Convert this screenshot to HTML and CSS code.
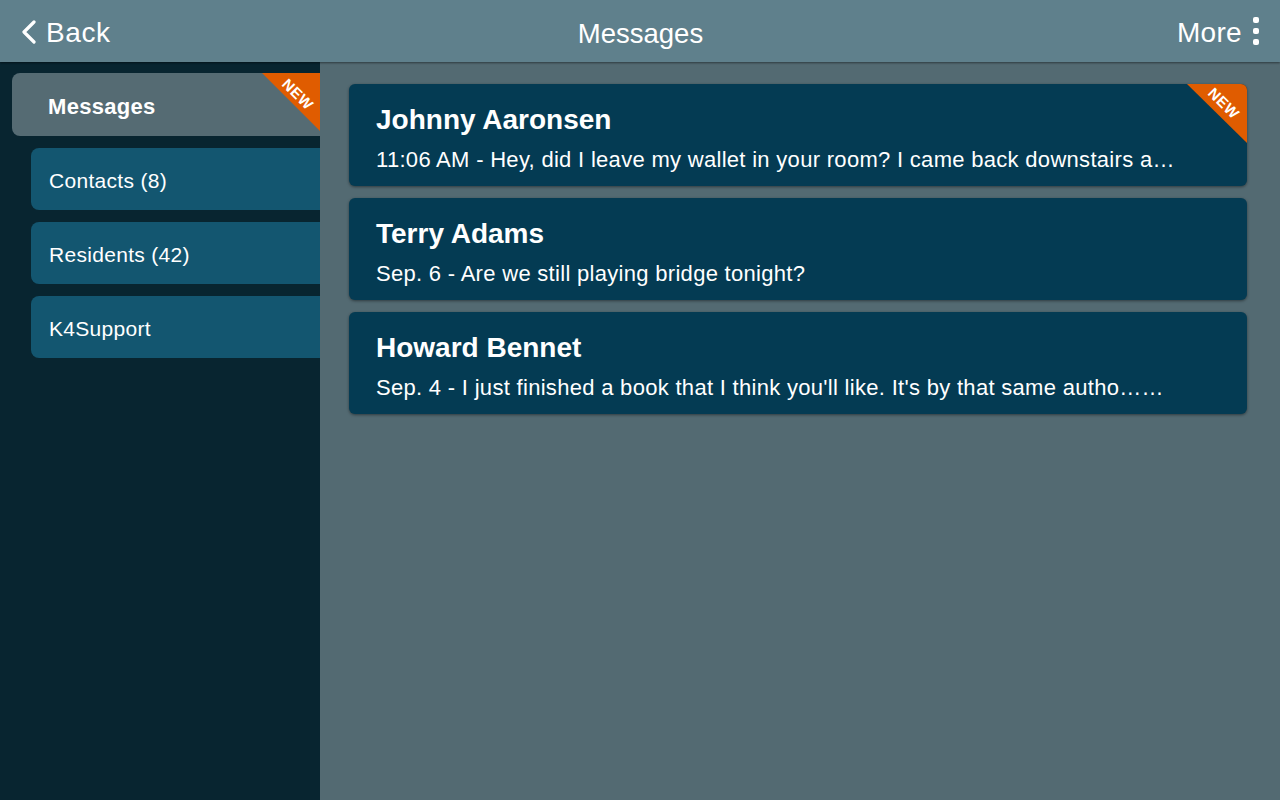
FILE: index.html
```html
<!DOCTYPE html>
<html>
<head>
<meta charset="utf-8">
<title>Messages</title>
<link rel="stylesheet" href="styles.css">
</head>
<body>
<header class="topbar">
  <div class="back">
    <svg class="chev" width="16" height="24" viewBox="0 0 16 24"><polyline points="13,2 3,12 13,22" fill="none" stroke="#fff" stroke-width="3.2" stroke-linecap="round" stroke-linejoin="round"/></svg>
    <span>Back</span>
  </div>
  <div class="title">Messages</div>
  <div class="more">
    <span>More</span>
    <svg class="dots" width="8" height="30" viewBox="0 0 8 30"><rect x="1" y="1" width="6" height="6" rx="2" fill="#fff"/><rect x="1" y="12" width="6" height="6" rx="2" fill="#fff"/><rect x="1" y="23" width="6" height="6" rx="2" fill="#fff"/></svg>
  </div>
</header>
<div class="body">
  <nav class="sidebar">
    <div class="nav-item active">Messages<div class="ribbon"><span>NEW</span></div></div>
    <div class="nav-item sub">Contacts (8)</div>
    <div class="nav-item sub">Residents (42)</div>
    <div class="nav-item sub">K4Support</div>
  </nav>
  <main class="main">
    <div class="card">
      <div class="name">Johnny Aaronsen</div>
      <div class="msg">11:06 AM - Hey, did I leave my wallet in your room? I came back downstairs a…</div>
      <div class="ribbon"><span>NEW</span></div>
    </div>
    <div class="card">
      <div class="name">Terry Adams</div>
      <div class="msg">Sep. 6 - Are we still playing bridge tonight?</div>
    </div>
    <div class="card">
      <div class="name">Howard Bennet</div>
      <div class="msg">Sep. 4 - I just finished a book that I think you'll like. It's by that same autho……</div>
    </div>
  </main>
</div>
</body>
</html>
```
FILE: styles.css
```css
html, body {
  margin: 0;
  padding: 0;
  width: 1280px;
  height: 800px;
  overflow: hidden;
  font-family: "Liberation Sans", Arial, sans-serif;
  color: #fff;
  background: #536a72;
}

.topbar {
  position: relative;
  z-index: 2;
  height: 62px;
  box-sizing: border-box;
  padding: 3px 20px 0 21px;
  background: #5f808c;
  display: grid;
  grid-template-columns: 1fr auto 1fr;
  align-items: center;
  box-shadow: 0 1px 2px rgba(0, 0, 0, 0.45);
  font-size: 28px;
}

.back {
  display: flex;
  align-items: center;
  gap: 9px;
}

.back span {
  letter-spacing: 0.6px;
}

.chev {
  display: block;
  margin-top: -1px;
}

.title {
  text-align: center;
  padding-top: 2px;
  font-size: 27.5px;
}

.more {
  display: flex;
  align-items: center;
  justify-content: flex-end;
  gap: 10px;
}

.more span {
  letter-spacing: 0.3px;
}

.dots {
  display: block;
  margin-top: -4px;
}

.body {
  display: flex;
  height: 738px;
}

.sidebar {
  width: 320px;
  flex: none;
  background: #082530;
  padding-top: 11px;
  box-sizing: border-box;
  display: flex;
  flex-direction: column;
  gap: 12px;
}

.nav-item {
  position: relative;
  display: flex;
  align-items: center;
  height: 62px;
  border-radius: 8px 0 0 8px;
  font-size: 21px;
  letter-spacing: 0.3px;
  overflow: hidden;
}

.nav-item.active {
  margin-left: 12px;
  height: 63px;
  padding-left: 36px;
  background: #556b73;
  font-weight: bold;
  font-size: 22px;
  padding-top: 4px;
  box-sizing: border-box;
}

.nav-item.sub {
  margin-left: 31px;
  padding-left: 18px;
  background: #135670;
  padding-top: 3px;
  box-sizing: border-box;
}

.ribbon {
  position: absolute;
  top: 0;
  right: 0;
  width: 58px;
  height: 58px;
  background: #e05c00;
  clip-path: polygon(0 0, 100% 0, 100% 100%);
}

.ribbon span {
  position: absolute;
  left: 36px;
  top: 21px;
  transform: translate(-50%, -50%) rotate(45deg);
  font-size: 15px;
  font-weight: bold;
  letter-spacing: 0.6px;
  line-height: 15px;
  color: #fff;
}

.main {
  flex: 1;
  padding: 22px 33px 0 29px;
  display: flex;
  flex-direction: column;
  gap: 12px;
}

.card {
  position: relative;
  height: 102px;
  box-sizing: border-box;
  padding: 20px 66px 0 27px;
  background: #043b53;
  border-radius: 6px;
  box-shadow: 0 1px 3px rgba(0, 0, 0, 0.45);
  overflow: hidden;
}

.card .ribbon {
  width: 60px;
  height: 59px;
}

.card .ribbon span {
  left: 37px;
  top: 19px;
}

.name {
  font-size: 28px;
  line-height: 32px;
  font-weight: bold;
  white-space: nowrap;
}

.msg {
  margin-top: 11px;
  font-size: 22px;
  line-height: 26px;
  letter-spacing: 0.3px;
  white-space: nowrap;
  overflow: hidden;
}
```
